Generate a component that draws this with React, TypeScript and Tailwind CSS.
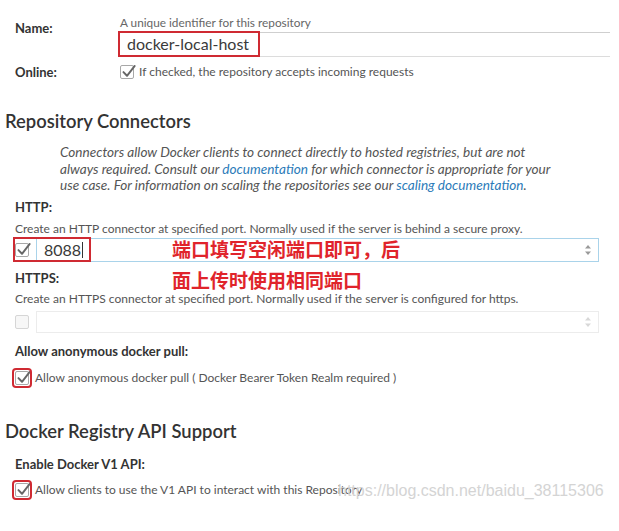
import type { ReactNode } from "react";

function Check({ checked = true, disabled = false }: { checked?: boolean; disabled?: boolean }) {
  return (
    <span
      className={`relative flex h-[14px] w-[14px] shrink-0 items-center justify-center rounded-[2px] border ${
        disabled ? "border-[#d6d6d6] bg-[#f7f7f7]" : "border-[#a8a8a8] bg-white"
      }`}
    >
      {checked && (
        <svg viewBox="0 0 14 14" className="absolute left-[0px] top-[-2px] h-[15px] w-[15px] overflow-visible">
          <path d="M2.3 7.6 L5.6 11 L12.8 1.8" fill="none" stroke="#666" strokeWidth="1.8" strokeLinecap="round" strokeLinejoin="round" />
        </svg>
      )}
    </span>
  );
}

function Label({ children, className = "" }: { children: ReactNode; className?: string }) {
  return <div className={`h-[14px] whitespace-nowrap text-[13px] leading-[14px] font-bold text-[#333] ${className}`}>{children}</div>;
}

function Help({ children, className = "" }: { children: ReactNode; className?: string }) {
  return <div className={`h-[14px] whitespace-nowrap text-[12px] leading-[14px] text-[#555] ${className}`}>{children}</div>;
}

function Spinner({ faded = false }: { faded?: boolean }) {
  const c = faded ? "#d8d8d8" : "#9a9a9a";
  return (
    <svg viewBox="0 0 8 14" className="h-[14px] w-[8px]">
      <path d="M1 5.5 L4 2 L7 5.5 Z" fill={c} />
      <path d="M1 8.5 L4 12 L7 8.5 Z" fill={c} />
    </svg>
  );
}

function RedCheck() {
  return (
    <span className="relative">
      <Check />
      <span className="absolute left-[-3px] top-[-3px] h-[20px] w-[20px] rounded-[4px] border-[2.5px] border-[#cf2a32]" />
    </span>
  );
}

export default function App() {
  return (
    <div className="relative h-[531px] w-[619px] overflow-hidden bg-white font-['Lato','Liberation_Sans',sans-serif] text-[#333]">
      {/* name */}
      <div className="flex pt-[16px]">
        <div className="w-[120px] pl-[15px] pt-[5px]">
          <Label>Name:</Label>
        </div>
        <div className="w-[490px]">
          <div className="h-[17px] border-b border-[#cfcfcf] text-[11.8px] leading-[14px] text-[#666]">
            A unique identifier for this repository
          </div>
          <div className="relative h-[24px] border-b border-[#dcdcdc] pl-[7px] text-[16px] leading-[22px] text-[#3a3a3a]">
            docker-local-host
            <div className="absolute left-[-2px] top-[-2px] h-[26px] w-[142px] border-[2.5px] border-[#cf2a32]" />
          </div>
        </div>
      </div>

      {/* online */}
      <div className="mt-[8px] flex h-[14px] items-center">
        <div className="w-[120px] pl-[15px]">
          <Label>Online:</Label>
        </div>
        <Check />
        <span className="ml-[5px] text-[12px] text-[#555]">If checked, the repository accepts incoming requests</span>
      </div>

      <h2 className="mt-[32px] h-[20px] whitespace-nowrap pl-[5px] text-[18.4px] leading-[20px] font-semibold text-[#333]">
        Repository Connectors
      </h2>

      <p className="mt-[13px] whitespace-nowrap pl-[60px] text-[13.6px] leading-[16.5px] italic text-[#555]">
        Connectors allow Docker clients to connect directly to hosted registries, but are not
        <br />
        always required. Consult our <span className="text-[#2b7bb9]">documentation</span> for which connector is
        appropriate for your
        <br />
        use case. For information on scaling the repositories see our{" "}
        <span className="text-[#2b7bb9]">scaling documentation</span>.
      </p>

      <div className="pl-[15px]">
        <Label className="mt-[6px]">HTTP:</Label>
        <Help className="mt-[8px]">
          Create an HTTP connector at specified port. Normally used if the server is behind a secure proxy.
        </Help>
        <div className="relative mt-[2px] flex h-[24px] items-center">
          <Check />
          <div className="ml-[7px] flex h-[24px] w-[563px] items-center justify-between border border-[#a9d3ea] pl-[7px] pr-[6px] text-[16px] text-[#3a3a3a]">
            <span className="flex items-center">
              8088<span className="ml-[1px] h-[16px] w-px bg-[#333]" />
            </span>
            <Spinner />
          </div>
          <div className="absolute left-[-2px] top-[-1px] h-[25px] w-[78px] border-[2.5px] border-[#cf2a32]" />
        </div>

        <Label className="mt-[9px]">HTTPS:</Label>
        <Help className="mt-[7px]">
          Create an HTTPS connector at specified port. Normally used if the server is configured for https.
        </Help>
        <div className="mt-[5px] flex h-[22px] items-center">
          <Check checked={false} disabled />
          <div className="ml-[7px] flex h-[22px] w-[563px] items-center justify-end border border-[#ececec] pr-[6px]">
            <Spinner faded />
          </div>
        </div>

        <Label className="mt-[11px]">Allow anonymous docker pull:</Label>
        <div className="mt-[13px] flex h-[14px] items-center">
          <RedCheck />
          <span className="ml-[6px] text-[12px] text-[#555]">Allow anonymous docker pull ( Docker Bearer Token Realm required )</span>
        </div>
      </div>

      <h2 className="mt-[36px] h-[20px] whitespace-nowrap pl-[5px] text-[18.4px] leading-[20px] font-semibold text-[#333]">
        Docker Registry API Support
      </h2>

      <div className="pl-[15px]">
        <Label className="mt-[16px]">Enable Docker V1 API:</Label>
        <div className="mt-[12px] flex h-[14px] items-center">
          <RedCheck />
          <span className="ml-[6px] text-[12px] text-[#555]">Allow clients to use the V1 API to interact with this Repository</span>
        </div>
      </div>

      {/* annotation */}
      <div className="absolute left-[172px] top-[237px] font-['Noto_Sans_CJK_SC',sans-serif] text-[19px] leading-[24px] font-bold text-[#e0242b]">
        <div>端口填写空闲端口即可，后</div>
        <div className="mt-[7px]">面上传时使用相同端口</div>
      </div>

      {/* watermark */}
      <div className="absolute left-[338px] top-[481px] font-['Liberation_Sans',sans-serif] text-[16px] leading-[20px] text-[#d4d4d4]">
        https://blog.csdn.net/baidu_38115306
      </div>
    </div>
  );
}
